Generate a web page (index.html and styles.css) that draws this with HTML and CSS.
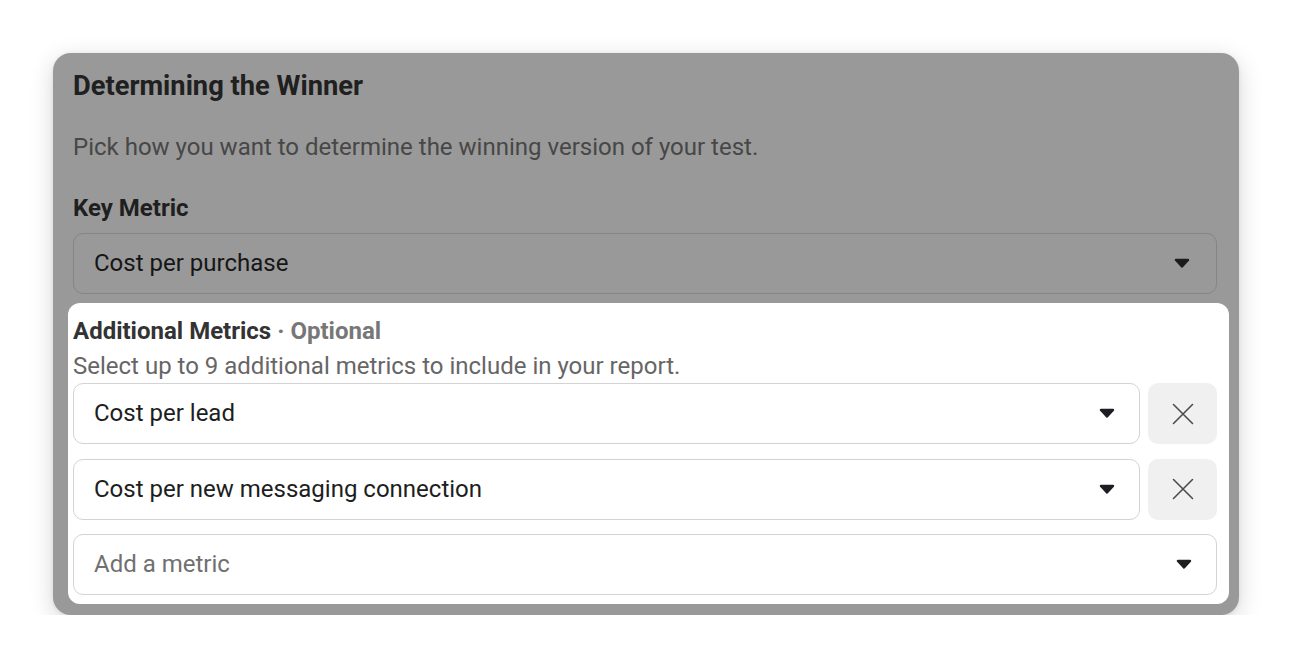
FILE: index.html
```html
<!DOCTYPE html>
<html lang="en">
<head>
<meta charset="utf-8">
<title>Determining the Winner</title>
<link rel="stylesheet" href="styles.css">
</head>
<body>
<div class="page">
  <section class="card">
    <h2 class="title">Determining the Winner</h2>
    <p class="desc">Pick how you want to determine the winning version of your test.</p>
    <div class="label">Key Metric</div>
    <div class="select select-dim">
      <span class="select-text">Cost per purchase</span>
      <svg class="caret" width="16" height="10" viewBox="0 0 16 10"><path d="M2 2 H14 L8 8.5 Z" fill="#1c1c1c" stroke="#1c1c1c" stroke-width="2.4" stroke-linejoin="round"/></svg>
    </div>

    <div class="highlight">
      <div class="label label-sm">Additional Metrics <span class="optional">· Optional</span></div>
      <p class="hint">Select up to 9 additional metrics to include in your report.</p>
      <div class="rows">
        <div class="row">
          <div class="select">
            <span class="select-text">Cost per lead</span>
            <svg class="caret" width="16" height="10" viewBox="0 0 16 10"><path d="M2 2 H14 L8 8.5 Z" fill="#1c1e21" stroke="#1c1e21" stroke-width="2.4" stroke-linejoin="round"/></svg>
          </div>
          <button class="remove" type="button" aria-label="Remove">
            <svg width="22" height="22" viewBox="0 0 22 22"><path d="M1.5 1.5 L20.5 20.5 M20.5 1.5 L1.5 20.5" stroke="#4b4c4f" stroke-width="1.6" stroke-linecap="round"/></svg>
          </button>
        </div>
        <div class="row">
          <div class="select">
            <span class="select-text">Cost per new messaging connection</span>
            <svg class="caret" width="16" height="10" viewBox="0 0 16 10"><path d="M2 2 H14 L8 8.5 Z" fill="#1c1e21" stroke="#1c1e21" stroke-width="2.4" stroke-linejoin="round"/></svg>
          </div>
          <button class="remove" type="button" aria-label="Remove">
            <svg width="22" height="22" viewBox="0 0 22 22"><path d="M1.5 1.5 L20.5 20.5 M20.5 1.5 L1.5 20.5" stroke="#4b4c4f" stroke-width="1.6" stroke-linecap="round"/></svg>
          </button>
        </div>
        <div class="row">
          <div class="select">
            <span class="select-text placeholder">Add a metric</span>
            <svg class="caret" width="16" height="10" viewBox="0 0 16 10"><path d="M2 2 H14 L8 8.5 Z" fill="#1c1e21" stroke="#1c1e21" stroke-width="2.4" stroke-linejoin="round"/></svg>
          </div>
        </div>
      </div>
    </div>
  </section>
</div>
</body>
</html>
```

FILE: styles.css
```css
* { box-sizing: border-box; }

html, body {
  margin: 0;
  background: #ffffff;
  font-family: Roboto, "Liberation Sans", Arial, sans-serif;
}

.page {
  padding: 53px 53px 0 53px;
}

.card {
  width: 1186px;
  background: #999999;
  border-radius: 18px;
  padding: 17px 22px 11px 20px;
  box-shadow: 0 6px 24px rgba(0, 0, 0, 0.16), 0 1px 4px rgba(0, 0, 0, 0.08);
}

.title {
  margin: 0;
  font-size: 27.3px;
  line-height: 32px;
  font-weight: 700;
  color: #202020;
}

.desc {
  margin: 30px 0 0 0;
  font-size: 24px;
  line-height: 30px;
  color: #474747;
}

.label {
  margin-top: 31px;
  font-size: 24px;
  line-height: 30px;
  font-weight: 700;
  color: #1f1f1f;
}

.select {
  flex: 1;
  height: 61px;
  border: 1.5px solid #d3d3d3;
  border-radius: 10px;
  background: #ffffff;
  display: flex;
  align-items: center;
  justify-content: space-between;
  padding: 0 24px 1px 20px;
}

.select-dim {
  margin-top: 10px;
  background: #999999;
  border-color: #858585;
  padding-right: 26px;
}

.select-text {
  font-size: 24px;
  line-height: 30px;
  color: #1c1e21;
}

.select-dim .select-text { color: #161616; }

.placeholder { color: #707070; }

.caret { display: block; flex: none; }

.highlight {
  margin: 9px -12px 0 -5px;
  padding: 13px 12px 9px 5px;
  background: #ffffff;
  border-radius: 12px;
}

.label-sm {
  margin-top: 0;
  color: #333333;
}

.optional {
  color: #777777;
}

.hint {
  margin: 5px 0 0 0;
  font-size: 24px;
  line-height: 30px;
  color: #666666;
}

.rows {
  margin-top: 2px;
  display: flex;
  flex-direction: column;
  gap: 14.5px;
}

.row {
  display: flex;
  gap: 8px;
}

.remove {
  width: 69px;
  height: 61px;
  flex: none;
  border: none;
  border-radius: 10px;
  background: #f0f0f0;
  display: flex;
  align-items: center;
  justify-content: center;
  padding: 0;
}
```
